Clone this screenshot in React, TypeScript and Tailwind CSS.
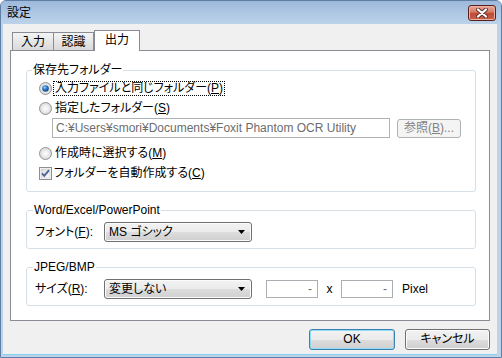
import React from 'react';

const Radio = ({ checked }: { checked?: boolean }) => (
  <svg width="13" height="13" viewBox="0 0 13 13" className="shrink-0">
    <defs>
      <radialGradient id="rbg" cx="50%" cy="50%" r="60%">
        <stop offset="0%" stopColor="#ffffff" />
        <stop offset="60%" stopColor="#e4e4e4" />
        <stop offset="100%" stopColor="#c8c8c8" />
      </radialGradient>
      <radialGradient id="rdot" cx="40%" cy="35%" r="70%">
        <stop offset="0%" stopColor="#9fd3fb" />
        <stop offset="45%" stopColor="#2b78c7" />
        <stop offset="100%" stopColor="#123f7a" />
      </radialGradient>
    </defs>
    <circle cx="6.5" cy="6.5" r="6" fill="url(#rbg)" stroke="#969696" />
    {checked && <circle cx="6.5" cy="6.5" r="3.3" fill="url(#rdot)" />}
  </svg>
);

const Check = () => (
  <svg width="13" height="13" viewBox="0 0 13 13" className="shrink-0">
    <defs>
      <linearGradient id="cbg" x1="0" y1="0" x2="1" y2="1">
        <stop offset="0%" stopColor="#d8d8d8" />
        <stop offset="100%" stopColor="#ffffff" />
      </linearGradient>
    </defs>
    <rect x="0.5" y="0.5" width="12" height="12" fill="#ffffff" stroke="#8f8f8f" />
    <rect x="2" y="2" width="9" height="9" fill="url(#cbg)" stroke="#c4c4c4" strokeWidth="0.6" />
    <path d="M3 6.3 L5.3 8.8 L10 3.2" fill="none" stroke="#4a5f9c" strokeWidth="1.8" />
  </svg>
);

const Arrow = () => (
  <svg width="7" height="4" viewBox="0 0 7 4" className="shrink-0">
    <path d="M0 0 H7 L3.5 4 Z" fill="#000000" />
  </svg>
);

const Combo = ({ value }: { value: string }) => (
  <div className="w-[148px] h-[20px] flex items-center justify-between pl-[4px] pr-[6px] border border-[#707070] rounded-[3px] bg-[linear-gradient(#f2f2f2,#ebebeb_50%,#dddddd_50%,#cfcfcf)] shadow-[inset_0_0_0_1px_#fcfcfc]">
    <span className="leading-[18px]">{value}</span>
    <Arrow />
  </div>
);

const Acc = ({ k }: { k: string }) => (
  <span>
    (<span className="underline underline-offset-[1px]">{k}</span>)
  </span>
);

export default function App() {
  return (
    <div className="w-[502px] h-[358px] flex flex-col font-['Liberation_Sans','Noto_Sans_CJK_JP',sans-serif] [font-feature-settings:'palt'] text-[12px] text-black bg-[#bcd3ea] border border-[#5f7ea3] rounded-t-[6px] overflow-hidden">
      {/* title bar */}
      <div className="h-[23px] shrink-0 flex items-center justify-between pl-[6px] pr-[5px] bg-gradient-to-b from-[#9db9db] to-[#bcd3ea]">
        <span className="leading-[16px] text-[12px]">設定</span>
        <div className="w-[28px] h-[16px] flex items-center justify-center rounded-[3px] border border-[#5b1f1a] bg-[linear-gradient(#e9a898,#d37a68_45%,#c14a36_50%,#c8604a)] shadow-[inset_0_0_0_1px_#eab2a6]">
          <svg width="12" height="10" viewBox="0 0 12 10">
            <path d="M2 1.5 L10 8.5 M10 1.5 L2 8.5" stroke="#5a2a24" strokeWidth="4" strokeLinecap="round" />
            <path d="M2 1.5 L10 8.5 M10 1.5 L2 8.5" stroke="#ffffff" strokeWidth="2.3" strokeLinecap="round" />
          </svg>
        </div>
      </div>

      {/* body */}
      <div className="flex-1 flex flex-col ml-[2px] mr-[4px] mb-[2px] bg-[#f0f0f0] px-[7px] pt-[6px] border-b border-[#7fd2ef]">
        {/* tabs */}
        <div className="h-[20px] flex items-end pl-[2px]">
          <div className="w-[42px] h-[18px] flex items-center justify-center border border-b-0 border-[#898c95] bg-gradient-to-b from-[#f4f4f4] to-[#d9d9d9] leading-[16px]">
            入力
          </div>
          <div className="w-[40px] h-[18px] flex items-center justify-center border border-b-0 border-l-0 border-[#898c95] bg-gradient-to-b from-[#f4f4f4] to-[#d9d9d9] leading-[16px]">
            認識
          </div>
          <div className="relative z-10 w-[46px] h-[21px] -mb-[1px] flex items-center justify-center pb-[3px] border border-b-0 border-[#898c95] bg-white leading-[16px]">
            出力
          </div>
        </div>

        {/* panel */}
        <div className="h-[271px] flex flex-col bg-white border border-[#898c95] pt-[12px] pl-[15px] pr-[13px]">
          <fieldset className="border border-[#d5dfe5] rounded-[3px] pl-[12px] pb-[8px]">
            <legend className="-ml-[7px] px-[1px] leading-[15px]">保存先フォルダー</legend>
            <div className="h-[20px] flex items-center gap-[2px]">
              <Radio checked />
              <span className="px-[1px] leading-[13px] outline-1 outline-dotted outline-black">
                入力ファイルと同じフォルダー<Acc k="P" />
              </span>
            </div>
            <div className="h-[20px] flex items-center gap-[3px]">
              <Radio />
              <span className="leading-[15px]">
                指定したフォルダー<Acc k="S" />
              </span>
            </div>
            <div className="flex items-start pl-[13px] gap-[7px]">
              <div className="w-[338px] h-[20px] flex items-center pl-[3px] border border-[#adb2b5] bg-white text-[#6d6d6d] leading-[16px] [font-feature-settings:normal]">
                C:¥Users¥smori¥Documents¥Foxit Phantom OCR Utility
              </div>
              <div className="mt-[1px] w-[64px] h-[19px] flex items-center justify-center border border-[#adb2b5] rounded-[3px] bg-[#f4f4f4] text-[#838383] leading-[15px]">
                参照<Acc k="B" />...
              </div>
            </div>
            <div className="mt-[5px] h-[20px] flex items-center gap-[3px]">
              <Radio />
              <span className="leading-[15px]">
                作成時に選択する<Acc k="M" />
              </span>
            </div>
            <div className="h-[20px] flex items-center gap-[2px]">
              <Check />
              <span className="leading-[15px]">
                フォルダーを自動作成する<Acc k="C" />
              </span>
            </div>
          </fieldset>

          <fieldset className="mt-[11px] border border-[#d5dfe5] rounded-[3px] pl-[8px] pt-[4px] pb-[6px]">
            <legend className="-ml-[2px] px-[1px] leading-[15px]">Word/Excel/PowerPoint</legend>
            <div className="flex items-center">
              <span className="w-[69px] leading-[15px]">
                フォント<Acc k="F" />:
              </span>
              <Combo value="MS ゴシック" />
            </div>
          </fieldset>

          <fieldset className="mt-[11px] border border-[#d5dfe5] rounded-[3px] pl-[8px] pt-[4px] pb-[6px]">
            <legend className="-ml-[2px] px-[1px] leading-[15px]">JPEG/BMP</legend>
            <div className="flex items-center">
              <span className="w-[69px] leading-[15px]">
                サイズ<Acc k="R" />:
              </span>
              <Combo value="変更しない" />
              <div className="ml-[14px] w-[52px] h-[18px] flex items-center justify-end pr-[5px] border border-[#abadb3] bg-white text-[#6d6d6d] leading-[14px]">
                -
              </div>
              <span className="w-[23px] text-center leading-[15px]">x</span>
              <div className="w-[52px] h-[18px] flex items-center justify-end pr-[5px] border border-[#abadb3] bg-white text-[#6d6d6d] leading-[14px]">
                -
              </div>
              <span className="ml-[9px] leading-[15px]">Pixel</span>
            </div>
          </fieldset>
        </div>

        {/* buttons */}
        <div className="mt-[8px] flex justify-end gap-[10px]">
          <div className="w-[86px] h-[21px] flex items-center justify-center rounded-[3px] border border-[#3c7fb1] bg-[linear-gradient(#f2f2f2,#ebebeb_50%,#dddddd_50%,#cfcfcf)] shadow-[inset_0_0_0_1px_#8fdcf5] leading-[15px]">
            OK
          </div>
          <div className="w-[85px] h-[21px] flex items-center justify-center rounded-[3px] border border-[#707070] bg-[linear-gradient(#f2f2f2,#ebebeb_50%,#dddddd_50%,#cfcfcf)] shadow-[inset_0_0_0_1px_#fcfcfc] leading-[15px]">
            キャンセル
          </div>
        </div>
      </div>
    </div>
  );
}
